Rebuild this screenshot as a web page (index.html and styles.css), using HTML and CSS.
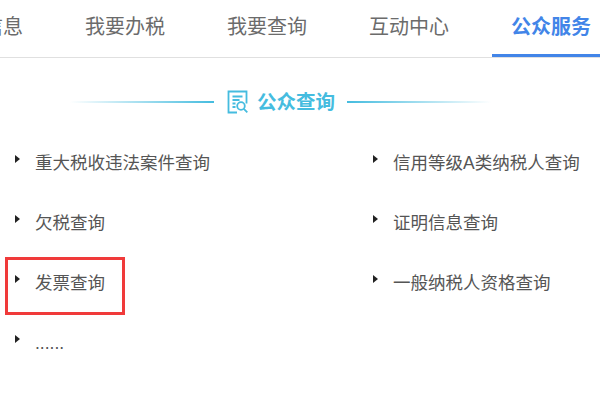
FILE: index.html
```html
<!DOCTYPE html>
<html>
<head>
<meta charset="UTF-8">
<title>公众查询</title>
<link rel="stylesheet" href="styles.css">
</head>
<body>
<div class="nav">
	<div class="tab">涉税信息</div>
	<div class="tab">我要办税</div>
	<div class="tab">我要查询</div>
	<div class="tab">互动中心</div>
	<div class="tab active">公众服务</div>
</div>
<div class="title">
	<span class="line left"></span>
	<svg class="icon" width="22" height="24" viewBox="0 0 22 24" fill="none" stroke="#45bcdf" stroke-width="1.800">
		<path d="M10 22.500H1.500V1.500h18v12"/>
		<path d="M5.500 6.500h10M5.500 10h7M5.500 13.500h3M5.500 17h3"/>
		<circle cx="14" cy="16" r="3.800"/>
		<path d="M16.800 18.800l3.500 3.500"/>
	</svg>
	<span class="title-text">公众查询</span>
	<span class="line right"></span>
</div>
<div class="list">
	<div class="item">重大税收违法案件查询</div>
	<div class="item">信用等级A类纳税人查询</div>
	<div class="item">欠税查询</div>
	<div class="item">证明信息查询</div>
	<div class="item">发票查询</div>
	<div class="item">一般纳税人资格查询</div>
	<div class="item">......</div>
</div>
<div class="mark"></div>
</body>
</html>
```

FILE: styles.css
```css
html, body {
	margin: 0;
	height: 400px;
	overflow: hidden;
	background: #fff;
}

body {
	position: relative;
	font-family: "Liberation Sans", "Noto Sans CJK SC", sans-serif;
}

.nav {
	display: flex;
	gap: 24px;
	height: 57px;
	margin-left: -76px;
	width: 676px;
	border-bottom: 1px solid #e0e0e0;
}

.tab {
	flex: none;
	width: 118px;
	height: 54px;
	line-height: 54px;
	text-align: center;
	font-size: 20px;
	color: #6b6b6b;
}

.tab.active {
	border-bottom: 3px solid #4285e8;
	color: #4285e8;
	font-weight: bold;
}

.title {
	display: flex;
	align-items: center;
	height: 24px;
	margin-top: 32px;
	padding-left: 70px;
}

.line {
	width: 144px;
	height: 2px;
}

.line.left {
	background: linear-gradient(to right, rgba(69,188,223,0), #45bcdf);
}

.line.right {
	margin-left: 12px;
	background: linear-gradient(to right, #45bcdf, rgba(69,188,223,0));
}

.icon {
	margin-left: 13px;
}

.title-text {
	margin-left: 8px;
	margin-bottom: 3px;
	font-size: 19.500px;
	font-weight: bold;
	color: #45bcdf;
}

.list {
	display: grid;
	grid-template-columns: 358px 1fr;
	grid-auto-rows: 60px;
	margin-top: 31px;
	padding-left: 35px;
}

.item {
	position: relative;
	height: 60px;
	line-height: 36px;
	font-size: 17.500px;
	color: #555;
}

.item::before {
	content: "";
	position: absolute;
	left: -20px;
	top: 10px;
	border-left: 5px solid #222;
	border-top: 4px solid transparent;
	border-bottom: 4px solid transparent;
}

.mark {
	position: absolute;
	left: 5px;
	top: 257px;
	width: 120px;
	height: 58px;
	box-sizing: border-box;
	border: 3px solid #f03a3a;
}
```
